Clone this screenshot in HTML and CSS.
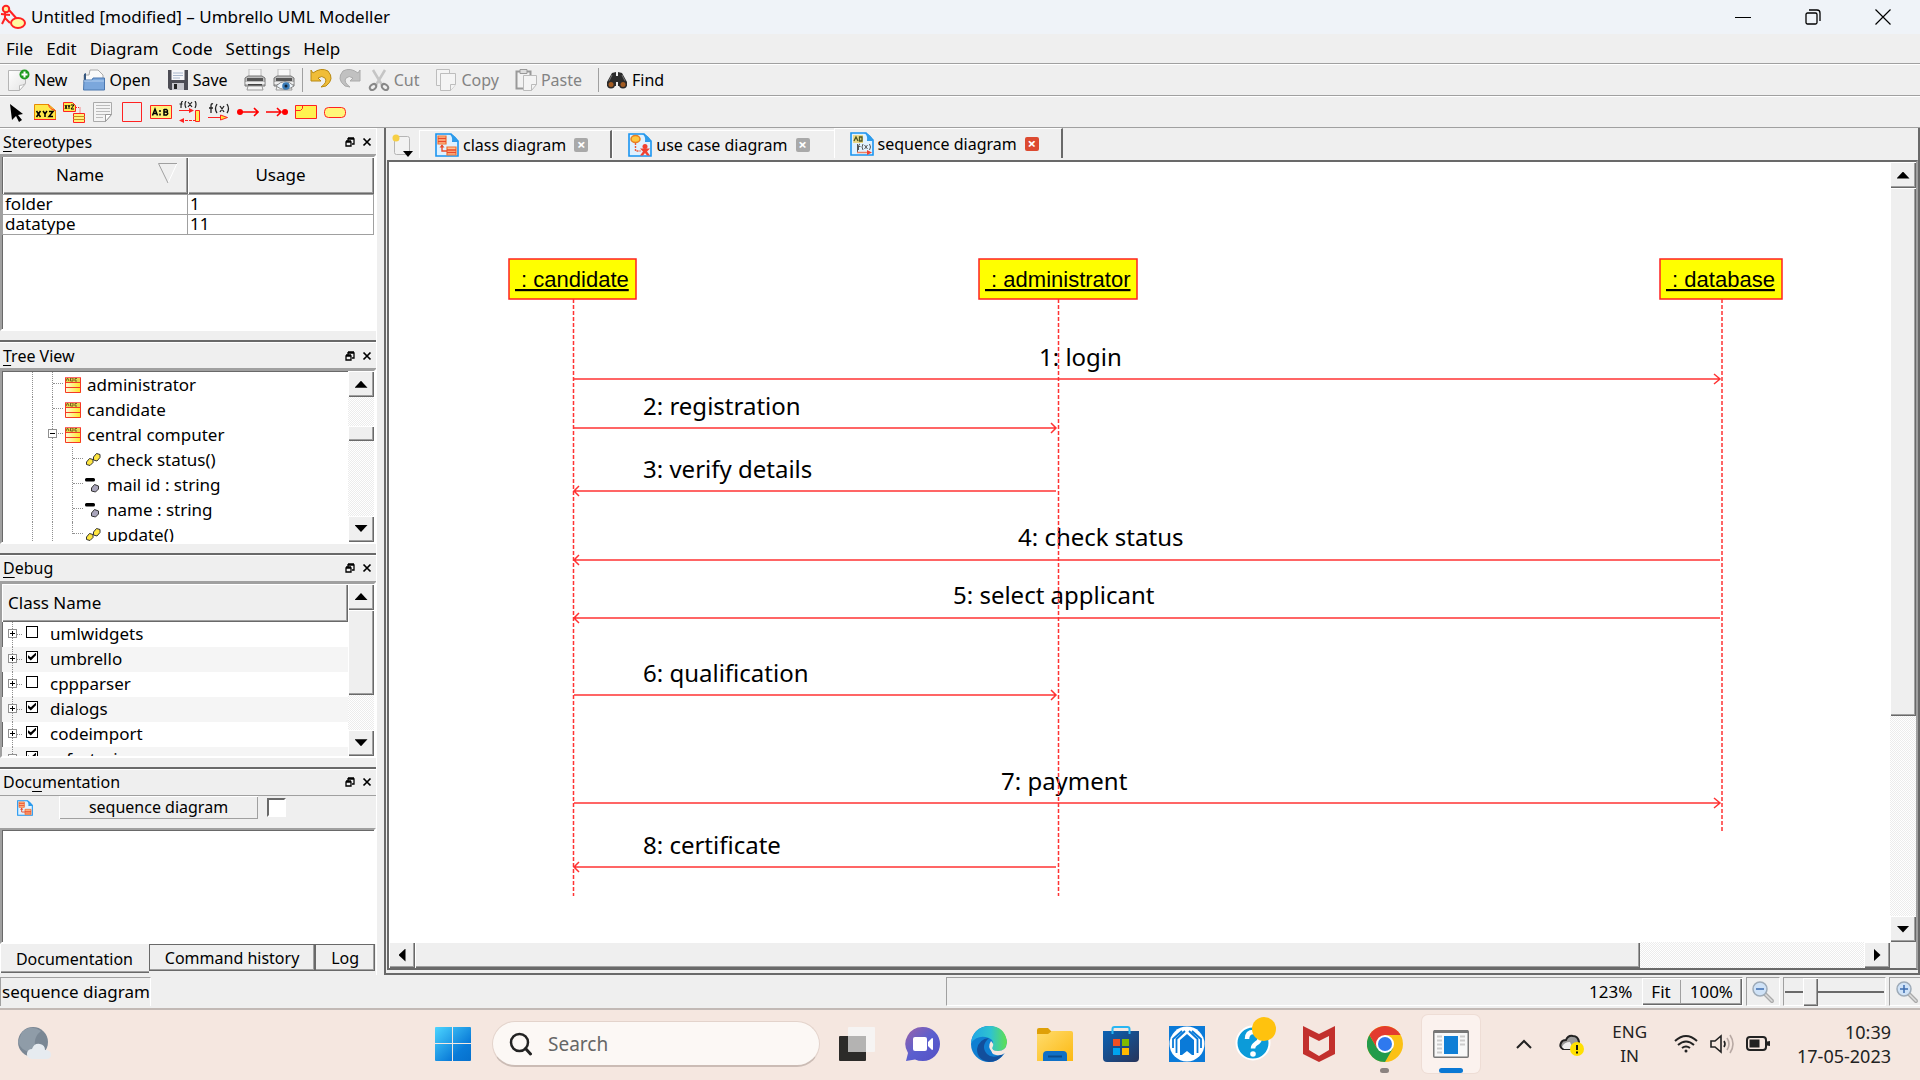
FILE: index.html
```html
<!DOCTYPE html>
<html lang="en">
<head>
<meta charset="utf-8">
<title>Untitled [modified] – Umbrello UML Modeller</title>
<link rel="stylesheet" href="styles.css">
</head>
<body>
<svg class="defs" aria-hidden="true">
  <defs>
    <linearGradient id="gPaper" x1="0" y1="0" x2="1" y2="1"><stop offset="0" stop-color="#fff"/><stop offset="1" stop-color="#e4e4e4"/></linearGradient>
    <linearGradient id="gYellow" x1="0" y1="0" x2="1" y2="0"><stop offset="0" stop-color="#fffbe0"/><stop offset="1" stop-color="#ffe620"/></linearGradient>
    <linearGradient id="gWin" x1="0" y1="0" x2="1" y2="1"><stop offset="0" stop-color="#4cd5ff"/><stop offset=".7" stop-color="#0a7bd8"/><stop offset="1" stop-color="#0670cc"/></linearGradient>
    <linearGradient id="gChat" x1="0" y1="0" x2="1" y2="1"><stop offset="0" stop-color="#9b62a8"/><stop offset=".5" stop-color="#5a5fcf"/><stop offset="1" stop-color="#5550c4"/></linearGradient>
    <linearGradient id="gEdge" x1="0" y1="0" x2="1" y2="0"><stop offset="0" stop-color="#1fa5e6"/><stop offset=".55" stop-color="#2fc3cf"/><stop offset="1" stop-color="#5fe04f"/></linearGradient>
    <linearGradient id="gFolder" x1="0" y1="0" x2="1" y2="1"><stop offset="0" stop-color="#ffdc6e"/><stop offset="1" stop-color="#fcb912"/></linearGradient>
    <linearGradient id="gStore" x1="0" y1="0" x2="1" y2="1"><stop offset="0" stop-color="#0a62b4"/><stop offset="1" stop-color="#28345a"/></linearGradient>
    <symbol id="class" viewBox="0 0 16 16"><rect width="16" height="16" fill="url(#gYellow)"/><path d="M0 0h16v5H0z" fill="#e4d84e"/><path d="M1 4L2.500 1L4 4M5.500 1v3h2.500v-3zM12 1.500h-2v2.500h2" fill="none" stroke="#765d20"/><path d="M.5.500v15h15V.5M0 5.500h16M0 10.500h16" fill="none" stroke="#f43a24"/><path d="M0 .5h16" stroke="#f66"/></symbol>
    <symbol id="op" viewBox="0 0 16 16"><path d="M8.500 5l3-3.500 3.500 1v3L12 9 8.500 8z" fill="#ffe640" stroke="#333"/><path d="M1.500 10l3-3.500L8 7.500v3L5 13.500 1.500 12.500z" fill="#ffe640" stroke="#333"/></symbol>
    <symbol id="attr" viewBox="0 0 16 16"><rect x="0" y="1" width="10" height="3.500" rx="1.500" fill="#000"/><path d="M6.500 11l3-3.500 4 1.500v3l-3 3-4-1z" fill="#a9a5bb" stroke="#333"/></symbol>
    <symbol id="float" viewBox="0 0 10 10"><path d="M3 2h6v5H7M3 1h6M1 5h5v4H1zM1 4h5M3 1v3" fill="none" stroke="#000" stroke-width="1.300"/></symbol>
    <symbol id="x" viewBox="0 0 10 10"><path d="M1.500 1.500l7 7M8.500 1.500l-7 7" stroke="#000" stroke-width="1.700"/></symbol>
    <symbol id="classdoc" viewBox="0 0 24 24"><path d="M1 1h15l7 7v15H1z" fill="#dff1ff" stroke="#1a94f0" stroke-width="1.600"/><path d="M14 1q4 2 3 8h6Q22 3 15 1z" fill="#2e9bea"/><path d="M3 3h8v8H3zM12 14h9v8h-9z" fill="#ffc090" stroke="#f07030" stroke-width="1.200"/><path d="M3 5.500h8M3 8.500h8M12 17h9M12 19.500h9M7 12v6h5" stroke="#ea4a2a" stroke-width="1.400" fill="none"/><path d="M4.500 14.500L7 11.500l2.500 3z" fill="#ea4a2a"/></symbol>
    <symbol id="usedoc" viewBox="0 0 24 24"><path d="M1 1h15l7 7v15H1z" fill="#dff1ff" stroke="#1a94f0" stroke-width="1.600"/><path d="M14 1q4 2 3 8h6Q22 3 15 1z" fill="#2e9bea"/><ellipse cx="7.500" cy="6" rx="4.500" ry="3.500" fill="#ffc840" stroke="#e88020" stroke-width="1.500"/><path d="M7.500 10v8h5" stroke="#ea5a3a" stroke-width="1.400" stroke-dasharray="2 1" fill="none"/><circle cx="17" cy="13.500" r="2.500" fill="#f04030"/><path d="M12 15.500h10l-3 3 3 4h-3l-2-2.500-2 2.500h-3l3-4z" fill="#f04030"/></symbol>
    <symbol id="seqdoc" viewBox="0 0 24 24"><path d="M1 1h15l7 7v15H1z" fill="#dff1ff" stroke="#1a94f0" stroke-width="1.600"/><path d="M14 1q4 2 3 8h6Q22 3 15 1z" fill="#2e9bea"/><rect x="3" y="3" width="10" height="8" fill="#ead889"/><path d="M4 9l2-4 2 4M9.500 5v4h2.500v-4z" stroke="#4b5520" fill="none" stroke-width="1.300"/><path d="M7.500 12v9M10 12q-1.500 0-1.500 3v3M7.500 14.500h3M13 12q-2 3 0 6M14.500 13l3 4M17.500 13l-3 4M19.500 12q2 3 0 6" stroke="#555" fill="none"/><path d="M7 20.500h11" stroke="#f08060" stroke-width="1.500"/><path d="M17 18l5 2.500-5 2.500z" fill="#f04030"/></symbol>
    <symbol id="printer" viewBox="0 0 22 22"><path d="M5 0h12v10H5z" fill="#f8f8f8" stroke="#bbb"/><path d="M1 9l3-2h14l3 2v8H1z" fill="#bdbdbd" stroke="#777"/><path d="M3 9h16v3H3z" fill="#555"/><path d="M1.500 14h19" stroke="#efefef" stroke-width="2"/><path d="M4 15h14v2H4z" fill="#444"/><path d="M4 17h14l1 4H3z" fill="#f4f4f4" stroke="#999"/></symbol>
    <symbol id="lens" viewBox="0 0 24 24"><path d="M14 14l7 7" stroke="#aaa" stroke-width="4" stroke-linecap="round"/><path d="M14 14l7 7" stroke="#ddd" stroke-width="1.500" stroke-linecap="round"/><circle cx="9" cy="9" r="7" fill="#cfe2f7" stroke="#9eabb8" stroke-width="1.500"/></symbol>
  </defs>
</svg>
<div class="screen">
  <header class="titlebar">
    <svg class="app-icon" viewBox="0 0 26 26"><g fill="none" stroke="#f22" stroke-width="2"><circle cx="6" cy="5" r="3.200" fill="#fff0a0"/><path d="M5 8v6M1 10l9 1M5 14l-3 6M5 14l5 5M9 6l8 9"/><ellipse cx="18" cy="19" rx="7" ry="5" fill="#fff9a0"/></g></svg>
    <h1>Untitled [modified] – Umbrello UML Modeller</h1>
    <div class="window-buttons">
      <button aria-label="Minimize"><svg viewBox="0 0 16 16"><path d="M0 8.500h16" stroke="#000"/></svg></button>
      <button aria-label="Restore"><svg viewBox="0 0 16 16" fill="none" stroke="#000" stroke-width="1.300"><rect x="1" y="4" width="11" height="11" rx="1.500"/><path d="M4 1h8q3 0 3 3v8"/></svg></button>
      <button aria-label="Close"><svg viewBox="0 0 16 16"><path d="M.5.500l15 15M15.500.500l-15 15" stroke="#000" stroke-width="1.200"/></svg></button>
    </div>
  </header>
  <nav class="menubar">
    <button>File</button><button>Edit</button><button>Diagram</button><button>Code</button><button>Settings</button><button>Help</button>
  </nav>
  <div class="toolbar">
    <button class="tool"><svg viewBox="0 0 22 22"><path d="M.5 1.500h17v13l-6 7H.5z" fill="url(#gPaper)" stroke="#b5b5b5"/><path d="M17.500 14.500l-6 7v-5q3 0 6-2z" fill="#fff" stroke="#bbb"/><circle cx="16.500" cy="5.500" r="5" fill="#1f9b1f"/><path d="M16.500 2.500v6M13.500 5.500h6" stroke="#fff" stroke-width="2"/></svg>New</button>
    <button class="tool"><svg viewBox="0 0 22 22"><path d="M1 6h5l1-5h8l5 5v8H1z" fill="#fafafa" stroke="#aaa"/><path d="M1 5l2-1v8H1z" fill="#36577f"/><path d="M1 11h8l1-2h11.500v12H.5z" fill="#7ba7dc" stroke="#4c78b0"/><path d="M1 12h20" stroke="#b7d2f2"/></svg>Open</button>
    <button class="tool"><svg viewBox="0 0 22 22"><path d="M1 1h20v20H3l-2-2z" fill="#4c4c54"/><path d="M4.500 1h13v10h-13z" fill="#f7f7fa"/><path d="M6 4h10M6 6.500h10M6 9h7" stroke="#a8b6cc"/><path d="M5 14h12v7H5z" fill="#c6c6cc"/><path d="M7 15h3v5H7z" fill="#222"/></svg>Save</button>
    <button class="tool icon" aria-label="Print"><svg viewBox="0 0 22 22"><use href="#printer"/></svg></button>
    <button class="tool icon" aria-label="Print preview"><svg viewBox="0 0 22 22"><use href="#printer"/><path d="M3 17q9-9 18 0-9 7-18 0z" fill="#eef5fb" stroke="#888"/><circle cx="13" cy="17" r="3.800" fill="#3a7cb8"/><circle cx="13" cy="17" r="1.500" fill="#123"/></svg></button>
    <span class="separator"></span>
    <button class="tool icon" aria-label="Undo"><svg viewBox="0 0 22 22"><path d="M1 1l2 3q8-6 15-2 7 8-2 15l-5 1q7-5 4-9-3-3-7 0l3 3H1z" fill="#f0bd38" stroke="#b98a12"/></svg></button>
    <button class="tool icon" aria-label="Redo" disabled><svg viewBox="0 0 22 22"><path d="M21 1l-2 3Q11-2 4 2q-7 8 2 15l5 1q-7-5-4-9 3-3 7 0l-3 3h10z" fill="#c1c1c1" stroke="#aaa"/></svg></button>
    <button class="tool" disabled><svg viewBox="0 0 22 22"><path d="M5 1l9 15M17 1L8 16" stroke="#c5c5c5" stroke-width="2.500"/><g fill="none" stroke="#888" stroke-width="2"><ellipse cx="5" cy="18" rx="3.500" ry="2.500" transform="rotate(-40 5 18)"/><ellipse cx="17" cy="18" rx="3.500" ry="2.500" transform="rotate(40 17 18)"/></g></svg>Cut</button>
    <button class="tool" disabled><svg viewBox="0 0 22 22"><g fill="#f4f4f4" stroke="#bdbdbd"><path d="M1.500.500h13v16h-13z"/><path d="M5.500 4.500h15v11l-5 6h-10z"/><path d="M20.500 15.500h-5v6"/></g></svg>Copy</button>
    <button class="tool" disabled><svg viewBox="0 0 22 22"><path d="M1.500 2.500h14v17h-14z" fill="#f2f2f2" stroke="#999" stroke-width="2"/><path d="M5 .5h7v4H5z" fill="#ddd" stroke="#999"/><path d="M8.500 6.500h13v9l-5 6h-8z" fill="#f4f4f4" stroke="#bbb"/><path d="M21.500 15.500h-5v6" fill="none" stroke="#bbb"/></svg>Paste</button>
    <span class="separator"></span>
    <button class="tool"><svg viewBox="0 0 22 22"><path d="M6 4l4-1v4h2V3l4 1 5 9v4H12v-4h-2v4H1v-4z" fill="#2b2b2b"/><path d="M6 6l-3 6M16 6l3 6" stroke="#777"/><circle cx="5" cy="15.500" r="4" fill="#2b2b2b"/><circle cx="17" cy="15.500" r="4" fill="#2b2b2b"/><circle cx="5" cy="15.500" r="2.500" fill="#a35c22"/><circle cx="17" cy="15.500" r="2.500" fill="#a35c22"/></svg>Find</button>
  </div>
  <div class="toolbar drawbar">
    <button aria-label="Select"><svg viewBox="0 0 22 22"><path d="M5 3l13 10-5 1 4 5-3 2-3-6-4 4z" fill="#000"/></svg></button>
    <button aria-label="Note"><svg viewBox="0 0 22 22"><path d="M.5 3.500h14l7 6v9H.5z" fill="#ffe84a" stroke="#e88a00"/><path d="M14.500 3.500q1 5 7 6" fill="none" stroke="#f22"/><path d="M0 18.500h22" stroke="#f22"/><path d="M2.500 10l4 6M6.500 10l-4 6M9 10l2 3 2-3M11 13v3M15 10.500h4l-4 5h4" stroke="#000" fill="none" stroke-width="1.500"/></svg></button>
    <button aria-label="Anchor"><svg viewBox="0 0 22 22"><path d="M.5 1.500h9l3 3v6H.5z" fill="#ffe84a" stroke="#f22"/><path d="M2 4l2 4M4 4L2 8M5 4l1 2 1-2M6 6v2M8 4h3L8 8h3" stroke="#000" fill="none"/><path d="M13 6.500h4v6" fill="none" stroke="#f22" stroke-dasharray="1 1"/><path d="M10.500 12.500h11v9h-11z" fill="#fff27a" stroke="#f22"/><path d="M10 15.500h12M10 18.500h12" stroke="#c88a20"/></svg></button>
    <button aria-label="Text"><svg viewBox="0 0 22 22"><path d="M1.500 1.500h18v12l-6 7h-12z" fill="#f4f4f4" stroke="#aaa"/><path d="M4 4.500h14M4 7.500h14M4 10.500h14M4 13.500h10M4 16.500h7" stroke="#bbb"/><path d="M19.500 13.500h-6v7z" fill="#fff" stroke="#999"/></svg></button>
    <button aria-label="Box"><svg viewBox="0 0 22 22"><path d="M1.500 1.500h19v19h-19z" fill="none" stroke="#f22"/></svg></button>
    <button aria-label="Object"><svg viewBox="0 0 22 22"><path d="M.5 4.500h21v13H.5z" fill="#fff27a" stroke="#f22"/><path d="M2.500 14.500L5 8l2.500 6.500M3.500 12.500h3M10 9v2M10 12.500v2M14 8v6h2.500q2.500-1.500 0-3H14M14 8.500h2.500q2 1.500 0 2.500" fill="none" stroke="#000" stroke-width="1.500"/></svg></button>
    <button aria-label="Synchronous message"><svg viewBox="0 0 22 22"><path d="M4 0q-2 0-2 7M.5 3h3M7 0q-2 3 0 7M9 1l4 5M13 1L9 6M16 0q2 3 0 7" fill="none" stroke="#222" stroke-width="1.200"/><path d="M0 9.500h12" stroke="#f22"/><path d="M2 19.500h14" stroke="#f22" stroke-dasharray="3 1"/><path d="M10 7l5 2.500-5 2.500zM5 17l-5 2.500L5 22z" fill="#f22"/><path d="M16.500 9.500h4v11h-4z" fill="#ffee50" stroke="#f22"/></svg></button>
    <button aria-label="Asynchronous message"><svg viewBox="0 0 22 22"><path d="M5 3q-2-1-2 2v7M1 7h4M9 3q-3 5 0 9M12 5l4 6M16 5l-4 6M19 3q3 5 0 9" fill="none" stroke="#222" stroke-width="1.300"/><path d="M0 16.500h14" stroke="#f22"/><path d="M12.500 14l7 2.500-7 2.500z" fill="#ffe030" stroke="#f22"/></svg></button>
    <button aria-label="Found message"><svg viewBox="0 0 22 22"><circle cx="3" cy="11" r="3" fill="#f00"/><path d="M3 11h18M17 7l4 4-4 4" stroke="#f00" stroke-width="1.600" fill="none"/></svg></button>
    <button aria-label="Lost message"><svg viewBox="0 0 22 22"><circle cx="19" cy="11" r="3" fill="#f00"/><path d="M0 11h15M11 7l4 4-4 4" stroke="#f00" stroke-width="1.600" fill="none"/></svg></button>
    <button aria-label="Combined fragment"><svg viewBox="0 0 22 22"><path d="M.5 4.500h21v13H.5z" fill="#fff250" stroke="#f22"/><path d="M.5 9.500h5l2-2v-3" fill="none" stroke="#f22"/></svg></button>
    <button aria-label="Precondition"><svg viewBox="0 0 22 22"><rect x=".5" y="6.500" width="21" height="10" rx="4" fill="#fff67a" stroke="#f22"/></svg></button>
  </div>

  <div class="workspace">
    <aside class="docks">
      <section class="dock dock-stereotypes">
        <div class="dock-title"><h2><u>S</u>tereotypes</h2><button aria-label="Float"><svg><use href="#float"/></svg></button><button aria-label="Close"><svg><use href="#x"/></svg></button></div>
        <div class="sunken">
          <table class="stereo">
            <thead><tr><th>Name<svg class="sort" viewBox="0 0 20 21"><path d="M19 .5L10 20" stroke="#fff" fill="none"/><path d="M19 .5H.5L10 20" stroke="#a0a0a0" fill="none"/></svg></th><th>Usage</th></tr></thead>
            <tbody><tr><td>folder</td><td>1</td></tr><tr><td>datatype</td><td>11</td></tr></tbody>
          </table>
        </div>
      </section>
      <section class="dock">
        <div class="dock-title"><h2><u>T</u>ree View</h2><button aria-label="Float"><svg><use href="#float"/></svg></button><button aria-label="Close"><svg><use href="#x"/></svg></button></div>
        <div class="sunken with-scroll">
          <ul class="tree">
            <li><i class="guide"></i><i class="guide elbow"></i><svg><use href="#class"/></svg>administrator</li>
            <li><i class="guide"></i><i class="guide elbow"></i><svg><use href="#class"/></svg>candidate</li>
            <li><i class="guide"></i><i class="guide elbow"><b class="expander minus"></b></i><svg><use href="#class"/></svg>central computer</li>
            <li><i class="guide"></i><i class="guide"></i><i class="guide elbow"></i><svg><use href="#op"/></svg>check status()</li>
            <li><i class="guide"></i><i class="guide"></i><i class="guide elbow"></i><svg><use href="#attr"/></svg>mail id : string</li>
            <li><i class="guide"></i><i class="guide"></i><i class="guide elbow"></i><svg><use href="#attr"/></svg>name : string</li>
            <li><i class="guide"></i><i class="guide"></i><i class="guide elbow last"></i><svg><use href="#op"/></svg>update()</li>
          </ul>
          <div class="scrollbar vertical tree-scroll"><button class="up" aria-label="Up"></button><span class="before"></span><span class="thumb"></span><span class="after"></span><button class="down" aria-label="Down"></button></div>
        </div>
      </section>
      <section class="dock">
        <div class="dock-title"><h2><u>D</u>ebug</h2><button aria-label="Float"><svg><use href="#float"/></svg></button><button aria-label="Close"><svg><use href="#x"/></svg></button></div>
        <div class="sunken with-scroll">
          <div class="debug">
            <div class="column-head">Class Name</div>
            <label><i class="guide"><b class="expander"></b></i><input type="checkbox">umlwidgets</label>
            <label><i class="guide"><b class="expander"></b></i><input type="checkbox" checked>umbrello</label>
            <label><i class="guide"><b class="expander"></b></i><input type="checkbox">cppparser</label>
            <label><i class="guide"><b class="expander"></b></i><input type="checkbox" checked>dialogs</label>
            <label><i class="guide"><b class="expander"></b></i><input type="checkbox" checked>codeimport</label>
            <label><i class="guide"><b class="expander"></b></i><input type="checkbox" checked>refactoring</label>
          </div>
          <div class="scrollbar vertical debug-scroll"><button class="up" aria-label="Up"></button><span class="thumb"></span><span class="after"></span><button class="down" aria-label="Down"></button></div>
        </div>
      </section>
      <section class="dock dock-doc">
        <div class="dock-title"><h2>Doc<u>u</u>mentation</h2><button aria-label="Float"><svg><use href="#float"/></svg></button><button aria-label="Close"><svg><use href="#x"/></svg></button></div>
        <div class="doc-row"><svg><use href="#classdoc"/></svg><button>sequence diagram</button><input type="checkbox" aria-label="Modified"></div>
        <textarea class="sunken" aria-label="Documentation"></textarea>
        <div class="dock-tabs"><button class="active">Documentation</button><button>Command history</button><button>Log</button></div>
      </section>
    </aside>

    <main class="editor">
      <div class="tabs">
        <button class="new-diagram" aria-label="New diagram"><svg viewBox="0 0 22 26"><path d="M4.500 4.500h11q2 0 2 2v14l-2 2h-11q-2 0-2-2v-14z" fill="#f2f2f2" stroke="#b5b5b5"/><circle cx="4" cy="6" r="3.500" fill="#f6cf45"/><path d="M11 19h10l-5 6z" fill="#000"/></svg></button>
        <div class="tab"><svg class="doc"><use href="#classdoc"/></svg><span>class diagram</span><button aria-label="Close class diagram">×</button></div>
        <div class="tab"><svg class="doc"><use href="#usedoc"/></svg><span>use case diagram</span><button aria-label="Close use case diagram">×</button></div>
        <div class="tab active"><svg class="doc"><use href="#seqdoc"/></svg><span>sequence diagram</span><button aria-label="Close sequence diagram">×</button></div>
      </div>
      <div class="view">
        <div class="canvas">
          <svg class="diagram" width="1500" height="780">
            <g class="objects">
              <rect x="120" y="97" width="127" height="40"/><rect x="590" y="97" width="158" height="40"/><rect x="1271" y="97" width="122" height="40"/>
            </g>
            <g class="names">
              <text x="126" y="125" xml:space="preserve"> : candidate</text>
              <text x="596" y="125" xml:space="preserve"> : administrator</text>
              <text x="1277" y="125" xml:space="preserve"> : database</text>
            </g>
            <g class="labels">
              <text x="650" y="204">1: login</text>
              <text x="254" y="253">2: registration</text>
              <text x="254" y="316">3: verify details</text>
              <text x="629" y="384">4: check status</text>
              <text x="564" y="442">5: select applicant</text>
              <text x="254" y="520">6: qualification</text>
              <text x="612" y="628">7: payment</text>
              <text x="254" y="692">8: certificate</text>
            </g>
            <path class="life" d="M184.500 137V734M669.500 137V734M1333 137V671"/>
            <g class="messages">
              <path d="M185 217H1331m-6 -5l6 5l-6 5"/>
              <path d="M185 266H667m-5 -5l5 5l-5 5"/>
              <path d="M667 329H185m5 -5l-5 5l5 5"/>
              <path d="M1331 398H185m5 -5l-5 5l5 5"/>
              <path d="M1331 456H185m5 -5l-5 5l5 5"/>
              <path d="M185 533H667m-5 -5l5 5l-5 5"/>
              <path d="M185 641H1331m-6 -5l6 5l-6 5"/>
              <path d="M667 705H185m5 -5l-5 5l5 5"/>
            </g>
          </svg>
        </div>
        <div class="scrollbar vertical view-v"><button class="up" aria-label="Up"></button><span class="thumb"></span><span class="after"></span><button class="down" aria-label="Down"></button></div>
        <div class="scrollbar horizontal view-h"><button class="left" aria-label="Left"></button><span class="thumb"></span><span class="after"></span><button class="right" aria-label="Right"></button></div>
      </div>
    </main>
  </div>

  <footer class="statusbar">
    <span class="status-text">sequence diagram</span>
    <span class="status-panel"><span>123%</span><span class="fit"><button>Fit</button><button>100%</button></span></span>
    <button class="status-cell" aria-label="Zoom out"><svg viewBox="0 0 24 24"><use href="#lens"/><path d="M5 9h8" stroke="#3c6cb0" stroke-width="1.500"/></svg></button>
    <span class="status-cell slider"><input type="range" aria-label="Zoom" min="0" max="100" value="22"></span>
    <button class="status-cell zoom-in" aria-label="Zoom in"><svg viewBox="0 0 24 24"><use href="#lens"/><path d="M5 9h8M9 5v8" stroke="#3c6cb0" stroke-width="1.500"/></svg></button>
  </footer>

  <div class="taskbar">
    <button class="weather" aria-label="Weather"><svg viewBox="0 0 36 36"><circle cx="16" cy="16" r="15" fill="#7a8794"/><path d="M5 6Q14-2 24 5q-10 8-4 20-14 4-19-9z" fill="#8f9ca8"/><path d="M15 33q-6-1-5-6 1-4 5-4 2-6 8-5 5 1 5 6 6 0 6 5 0 4-5 4z" fill="#e6ebf0"/></svg></button>
    <div class="apps">
      <button class="app" aria-label="Start"><svg viewBox="0 0 36 36"><path d="M0 2q0-1 1-1h16v16H0zM18 1h17q1 0 1 1v15H18zM0 18h17v17H1q-1 0-1-1zM18 18h18v16q0 1-1 1H18z" fill="url(#gWin)"/></svg></button>
      <label class="search"><svg viewBox="0 0 24 24"><circle cx="10.500" cy="10.500" r="8.500" fill="none" stroke="#222" stroke-width="2.500"/><path d="M16.500 16.500l5 5.500" stroke="#222" stroke-width="3" stroke-linecap="round"/></svg><input type="text" placeholder="Search" aria-label="Search"></label>
      <button class="app" aria-label="Task view"><svg viewBox="0 0 36 36"><rect x="0" y="10" width="27" height="25" rx="1" fill="#2c2b29"/><rect x="9" y="1" width="27" height="25" rx="1" fill="#f6f4f3"/><path d="M9 10h18v16H9z" fill="#b4b3b2"/></svg></button>
      <button class="app" aria-label="Chat"><svg viewBox="0 0 36 36"><path d="M18 1a17 17 0 0 1 0 34q-5 0-8-1.500L1 35l2-8A17 17 0 0 1 18 1z" fill="url(#gChat)"/><rect x="8" y="11" width="14" height="14" rx="2" fill="#fff"/><path d="M23 16l4-4q1 0 1 1v10q0 1-1 1l-4-4z" fill="#fff"/></svg></button>
      <button class="app" aria-label="Edge"><svg viewBox="0 0 36 36"><circle cx="18" cy="18" r="18" fill="#0f7fd2"/><path d="M0 17Q2 1 18 0q16 0 18 16 0 9-10 9-6 0-6-3 5-7-2-10Q7 8 0 17z" fill="url(#gEdge)"/><path d="M18 12q-9 8-2 16 6 6 17-1-5 9-15 9-12-2-12-13 2-10 12-11z" fill="#124f9c"/><path d="M36 17q-1 8-9 8-7 0-6-4-2 7 4 8 5 1 9-2l2-2z" fill="#f5e7e0"/><path d="M20 15q-4 6 1 11 5 4 11 1-5-1-9-2-3-2-1-5 1-2-2-5z" fill="#f5e7e0"/></svg></button>
      <button class="app" aria-label="File Explorer"><svg viewBox="0 0 36 36"><path d="M0 4q0-2 2-2h9l4 4v5H0z" fill="#dfa008"/><path d="M0 8h11l4-3h19q2 0 2 2v28H0z" fill="url(#gFolder)"/><path d="M6 35v-6q0-4 4-4h16q4 0 4 4v6z" fill="#0f70c6"/><path d="M11 30.500h14" stroke="#0a4c8c" stroke-width="2"/></svg></button>
      <button class="app" aria-label="Store"><svg viewBox="0 0 36 36"><path d="M9.500 9V3q0-2 2-2h13q2 0 2 2v6" fill="none" stroke="#29b6f2" stroke-width="2"/><path d="M0 5h36v27q0 4-4 4H4q-4 0-4-4z" fill="url(#gStore)"/><path d="M9.500 8V5M26.500 8V5" stroke="#29b6f2" stroke-width="2"/><path d="M10 13h7v7h-7z" fill="#f25022"/><path d="M19 13h7v7h-7z" fill="#7fba00"/><path d="M10 22h7v7h-7z" fill="#00a4ef"/><path d="M19 22h7v7h-7z" fill="#ffb900"/></svg></button>
      <button class="app" aria-label="Support"><svg viewBox="0 0 36 36"><path d="M0 0h36v36H0z" fill="#0a7ad8"/><circle cx="18" cy="18" r="17.500" fill="#fff"/><path d="M11 29V14l7-6 7 6v15h-2l-5-4-5 4z" fill="#0a7ad8"/><path d="M7.500 27V13L16 5M28.500 27V13L20 5M4 22v-9l9-8M32 22v-9l-9-8" fill="none" stroke="#0a7ad8" stroke-width="1.800"/></svg></button>
      <button class="app help" aria-label="Help"><svg viewBox="-3 0 46 46"><circle cx="20" cy="27" r="16.500" fill="#0c9bd9" stroke="#fff" stroke-width="2"/><path d="M14 23q0-7 6.500-7t6.500 5.500q0 4-4 6-3 2-3 5" fill="none" stroke="#fff" stroke-width="4.500"/><circle cx="20" cy="38" r="2.800" fill="#fff"/><circle cx="31" cy="13" r="12" fill="#ffc20e"/></svg></button>
      <button class="app" aria-label="McAfee"><svg viewBox="0 0 36 36"><path d="M2 0l16 8 16-8v28l-16 8L2 28zM8 10v14l10 6 10-6V10l-10 5z" fill="#c2302d" fill-rule="evenodd"/></svg></button>
      <button class="app running" aria-label="Chrome"><svg viewBox="0 0 36 36"><circle cx="18" cy="18" r="18" fill="#fbc116"/><path d="M2.500 9A18 18 0 0 1 33.600 9H18z" fill="#e33b2e"/><path d="M2.400 9A18 18 0 0 0 18 36l7.800-13.500L10 22z" fill="#239b4b"/><path d="M2.400 9L10 22 18 9z" fill="#e33b2e"/><circle cx="18" cy="18" r="9" fill="#fff"/><circle cx="18" cy="18" r="7" fill="#2f79ee"/></svg></button>
      <button class="app current" aria-label="Umbrello"><svg viewBox="0 0 36 36"><rect x=".75" y="4.750" width="34.500" height="26.500" rx="1" fill="#f8f8f8" stroke="#777" stroke-width="1.500"/><path d="M1 5.500h34" stroke="#777" stroke-width="3"/><path d="M11 10h14v18H11z" fill="#0f7fd6"/><path d="M4 10.500h5M4 14.500h5M4 18.500h5M4 22.500h5M4 26.500h5M27 10.500h5M27 14.500h5M27 18.500h5" stroke="#ccc" stroke-width="2"/></svg></button>
    </div>
    <div class="tray">
      <button aria-label="Hidden icons"><svg width="16" height="16" viewBox="0 0 16 16"><path d="M1 12l7-7 7 7" fill="none" stroke="#222" stroke-width="2"/></svg></button>
      <button class="cloud" aria-label="OneDrive"><svg width="26" height="24" viewBox="0 0 26 24"><path d="M4 17q-4-2-2-6 1-3 5-3 2-5 7-4 5 0 6 6v7z" fill="#9a9a9a" stroke="#222" stroke-width="2"/><path d="M3 15q2-5 8-5l3 7H5z" fill="#eee"/><circle cx="18" cy="17" r="7" fill="#ffe000"/><path d="M18 13v5M18 19.500v2" stroke="#111" stroke-width="2"/></svg></button>
      <button class="lang">ENG<br>IN</button>
      <button class="system" aria-label="Network, volume and battery">
        <svg width="24" height="24" viewBox="0 0 24 24" fill="none" stroke="#222" stroke-width="2"><path d="M1 9q11-10 22 0M4 13q8-7 16 0M8 16q4-3 8 0"/><circle cx="12" cy="19" r="1.500" fill="#222" stroke="none"/></svg>
        <svg width="24" height="24" viewBox="0 0 24 24" fill="none" stroke="#222" stroke-width="1.600"><path d="M1 9h4l6-5v16l-6-5H1zM14 9q2 3 0 6"/><path d="M17 6q4 6 0 12M20 3q6 9 0 18" stroke="#b8a9a4"/></svg>
        <svg width="24" height="24" viewBox="0 0 24 24"><rect x="1" y="5" width="19" height="13" rx="3" fill="none" stroke="#222" stroke-width="2"/><rect x="3.500" y="7.500" width="10" height="8" fill="#222"/><path d="M21 9.500l3-.5v5l-3-.5z" fill="#222"/></svg>
      </button>
      <button class="clock">10:39<br>17-05-2023</button>
    </div>
  </div>
</div>
</body>
</html>
```
FILE: styles.css
```css
:root {
  --face: #efefef;
  --mid: #a0a0a0;
  --dark: #696969;
  --bevel: inset 1px 1px #fff, inset -1px -1px var(--dark), inset -2px -2px var(--mid);
}
* { box-sizing: border-box; }
body {
  margin: 0;
  font: 17px/24px "Noto Sans", "Open Sans", sans-serif;
  color: #000;
  background: var(--face);
}
button, input, textarea { font: inherit; color: inherit; margin: 0; }
button { border: 0; padding: 0; background: none; white-space: nowrap; }
h1, h2 { margin: 0; font-size: inherit; font-weight: 400; }
ul { margin: 0; padding: 0; list-style: none; }
i, b { font-style: normal; }
u { text-underline-offset: 3px; }
svg { display: block; flex: none; }
.defs { position: absolute; width: 0; height: 0; }

.screen { display: flex; flex-direction: column; height: 100vh; overflow: hidden; }

/* Title and menu */
.titlebar { display: flex; align-items: center; flex: none; height: 34px; background: #eff3f8; }
.app-icon { width: 26px; height: 26px; margin-right: 5px; }
.titlebar h1 { flex: 1; }
.window-buttons { display: flex; padding-right: 2px; }
.window-buttons button { width: 70px; height: 34px; display: grid; place-items: center; }
.window-buttons svg { width: 16px; height: 16px; }
.menubar { display: flex; flex: none; height: 30px; padding-left: 6px; gap: 13px; border-bottom: 1px solid var(--mid); }

/* Toolbars */
.toolbar { display: flex; flex: none; align-items: center; height: 32px; padding-left: 8px; gap: 7px; border-top: 1px solid #fff; border-bottom: 1px solid var(--mid); font-size: 16px; }
.tool { display: flex; align-items: center; gap: 4px; padding-right: 9px; }
.tool svg { width: 22px; height: 22px; }
.tool.icon { padding: 0; }
.tool:disabled { color: #838383; }
.separator { width: 1px; height: 24px; background: var(--mid); }
.drawbar { padding-left: 5px; }
.drawbar svg { width: 22px; height: 22px; }

/* Bevelled parts */
.sunken { border: 2px solid; border-color: var(--mid) #fff #fff var(--mid); box-shadow: inset 1px 1px var(--dark); background: #fff; }
.scrollbar { display: flex; background: repeating-conic-gradient(#fff 0 25%, #ececec 0 50%) 0 0 / 2px 2px; }
.vertical { flex-direction: column; width: 26px; }
.scrollbar button, .thumb { background: var(--face); box-shadow: var(--bevel); }
.scrollbar button { flex: none; width: 26px; height: 26px; display: grid; place-items: center; }
.scrollbar button::before { content: ""; width: 13px; height: 7px; background: #000; clip-path: polygon(50% 0, 100% 100%, 0 100%); }
.scrollbar .down::before { clip-path: polygon(0 0, 100% 0, 50% 100%); }
.scrollbar .left::before { width: 7px; height: 13px; clip-path: polygon(0 50%, 100% 0, 100% 100%); }
.scrollbar .right::before { width: 7px; height: 13px; clip-path: polygon(0 0, 100% 50%, 0 100%); }

.workspace { display: grid; grid-template-columns: 377px 1fr; column-gap: 7px; flex: 1; min-height: 0; }

/* Docks */
.docks { display: grid; grid-template-rows: 214fr 212fr 214fr 206fr; min-height: 0; border-right: 1px solid #fff; }
.dock { display: flex; flex-direction: column; min-height: 0; padding-bottom: 9px; border-bottom: 2px solid var(--dark); }
.dock-title { display: flex; align-items: center; flex: none; height: 27px; padding: 0 4px 0 3px; gap: 7px; border-top: 1px solid #fff; border-bottom: 1px solid var(--mid); font-size: 16px; }
.dock-title h2 { flex: 1; }
.dock-title svg { width: 10px; height: 10px; }
.dock > .sunken { flex: 1; min-height: 0; width: 376px; overflow: hidden; }
.with-scroll { display: grid; grid-template-columns: 1fr 26px; }

.stereo { width: 100%; border-collapse: collapse; table-layout: fixed; line-height: 18px; }
.stereo th { position: relative; height: 37px; padding: 0; font-weight: 400; background: var(--face); box-shadow: var(--bevel); }
.stereo th:first-child { width: 185px; padding-right: 30px; }
.stereo td { height: 20px; padding: 0 0 0 2px; border: 1px solid var(--mid); }
.sort { position: absolute; right: 10px; top: 6px; width: 20px; height: 21px; }

.tree { padding: 1px 0 0 30px; overflow: hidden; }
.tree li { display: flex; align-items: center; height: 25px; }
.tree svg { width: 16px; height: 16px; margin-right: 6px; }
.guide { position: relative; flex: none; align-self: stretch; width: 20px; border-left: 1px dotted #909090; }
.elbow { width: 13px; }
.elbow::after { content: ""; position: absolute; left: 0; top: 11px; width: 10px; border-top: 1px dotted #909090; }
.elbow.last { height: 12px; }
.expander { position: absolute; left: -5px; top: 7px; z-index: 1; width: 9px; height: 9px; border: 1px solid #909090; background: linear-gradient(#000, #000) center / 5px 1px no-repeat, linear-gradient(#000, #000) center / 1px 5px no-repeat, #fff; }
.expander.minus { background: linear-gradient(#000, #000) center / 5px 1px no-repeat, #fff; }
.tree-scroll .before { flex: 30; }
.tree-scroll .thumb { flex: 15; }
.tree-scroll .after { flex: 77; }

.debug { overflow: hidden; }
.column-head { height: 38px; padding: 7px 6px 0; background: var(--face); box-shadow: var(--bevel); }
.debug label { display: flex; height: 25px; padding-left: 10px; }
.debug label:nth-of-type(even) { background: #f5f5f5; }
.debug .guide { width: 14px; }
.debug .guide::after { content: ""; position: absolute; left: 4px; top: 12px; width: 5px; border-top: 1px dotted #909090; }
.debug input { appearance: none; width: 12px; height: 12px; margin: 4px 12px 0 0; border: 1px solid #000; background: #fff; }
.debug input:checked::before { content: ""; display: block; width: 8px; height: 8px; margin: 1px; background: #000; clip-path: polygon(0 35%, 35% 60%, 100% 0, 100% 35%, 35% 100%, 0 70%); }
.debug-scroll .thumb { flex: 87; }
.debug-scroll .after { flex: 36; }

.dock-doc { padding-bottom: 0; border-bottom: 0; font-size: 16px; }
.doc-row { display: flex; align-items: flex-start; flex: none; height: 32px; padding-left: 17px; }
.doc-row svg { width: 16px; height: 16px; margin: 4px 26px 0 0; }
.doc-row button { width: 199px; height: 23px; line-height: 22px; box-shadow: inset 1px 1px #fff, inset -1px -1px var(--mid); }
.doc-row input { appearance: none; width: 19px; height: 19px; margin: 2px 0 0 9px; border: 2px solid; border-color: var(--dark) #fff #fff var(--dark); background: #fff; }
textarea.sunken { display: block; resize: none; outline: 0; }
.dock-tabs { display: flex; align-items: flex-start; flex: none; height: 31px; width: 375px; }
.dock-tabs button { flex: auto; height: 27px; padding: 0 8px; box-shadow: inset 1px 1px var(--dark), inset -1px -1px var(--dark), inset -2px -2px var(--mid); }
.dock-tabs .active { height: 29px; box-shadow: inset 1px 0 #fff, inset 0 -1px var(--dark), inset 0 -2px var(--mid); }

/* Editor */
.editor { display: flex; flex-direction: column; min-width: 0; min-height: 0; border: solid var(--dark); border-width: 0 2px 2px 2px; }
.tabs { display: flex; align-items: flex-end; flex: none; height: 32px; padding: 0 0 2px 6px; font-size: 16px; }
.new-diagram svg { width: 22px; height: 26px; }
.tab { display: flex; align-items: center; height: 28px; padding: 0 22px 0 15px; border: 1px solid #fff; border-right: 2px solid var(--dark); border-bottom: 0; }
.new-diagram + .tab { margin-left: 5px; }
.tab:nth-of-type(2) { border-right: 0; padding-right: 24px; }
.tab.active { height: 30px; }
.tab .doc { width: 24px; height: 24px; margin-right: 4px; }
.tab button { width: 14px; height: 14px; margin-left: 8px; border-radius: 2px; background: #a9a9a9; color: #fff; font-size: 15px; font-weight: 700; line-height: 13px; }
.tab.active button { background: #dc4a30; }
.view { display: grid; grid-template: 1fr 26px / 1fr 26px; flex: 1; min-height: 0; margin: 0 0 3px 1px; border: 2px solid; border-color: var(--dark) var(--mid) var(--dark) var(--dark); }
.canvas { overflow: hidden; background: #fff; min-width: 0; min-height: 0; }
.view-v .thumb { flex: 529; }
.view-v .after { flex: 201; }
.view-h .thumb { flex: 1226; }
.view-h .after { flex: 224; }
.objects rect { fill: #ff0; stroke: #f22; stroke-width: 1.500; }
.names { font: 22px "Liberation Sans", Arial, sans-serif; text-decoration: underline; }
.labels { font: 24px "Noto Sans", sans-serif; }
.life { stroke: #f33; stroke-width: 1.500; stroke-dasharray: 4 2; }
.messages { fill: none; stroke: #f33; stroke-width: 1.500; }

/* Status bar */
.statusbar { display: flex; align-items: stretch; flex: none; height: 35px; padding: 2px 0; gap: 3px; border-bottom: 2px solid #c2b9b5; }
.status-text { display: flex; align-items: center; padding-left: 1px; border-left: 1px solid var(--mid); border-top: 1px solid var(--mid); border-right: 1px solid #fff; }
.status-panel { display: flex; align-items: center; justify-content: flex-end; gap: 10px; width: 797px; margin-left: auto; border: 1px solid; border-color: var(--mid) #fff #fff var(--mid); }
.fit { display: flex; align-items: center; align-self: stretch; box-shadow: var(--bevel); }
.fit button { padding: 0 9px; }
.fit button + button { border-left: 1px solid var(--mid); }
.status-cell { display: grid; place-items: center; width: 34px; border: 1px solid; border-color: var(--mid) #fff #fff var(--mid); }
.status-cell svg { width: 24px; height: 24px; }
.status-cell.zoom-in { width: 31px; border-right: 0; padding-left: 4px; }
.slider { width: 103px; }
.slider input { appearance: none; width: 99px; height: 28px; background: linear-gradient(var(--dark), var(--dark)) center / 100% 2px no-repeat; }
.slider input::-webkit-slider-thumb { appearance: none; width: 15px; height: 28px; background: var(--face); box-shadow: var(--bevel); }

/* Taskbar */
.taskbar { display: grid; grid-template-columns: 420fr auto 436fr; align-items: center; flex: none; height: 70px; padding-bottom: 2px; background: #f5e7e0; }
.weather { justify-self: start; margin-left: 17px; }
.weather svg { width: 36px; height: 36px; }
.apps { display: flex; align-items: center; }
.app { position: relative; width: 66px; height: 58px; display: grid; place-items: center; }
.app svg { width: 36px; height: 36px; }
.app.help svg { width: 46px; height: 46px; margin-bottom: 10px; }
.search { display: flex; align-items: center; gap: 15px; width: 328px; height: 46px; margin: 0 4px 0 6px; padding: 0 16px; border: 1px solid #e3d3cb; border-bottom: 2px solid #cbbcb5; border-radius: 23px; background: #fcf8f5; }
.search svg { width: 24px; height: 24px; }
.search input { flex: 1; min-width: 0; padding: 0; border: 0; outline: 0; background: none; font-size: 19px; }
.search input::placeholder { color: #666; opacity: 1; }
.running::after, .current::after { content: ""; position: absolute; left: 28px; bottom: 0; width: 9px; height: 5px; border-radius: 3px; background: #8c8380; }
.current { width: 58px; margin: 0 4px; border-radius: 6px; background: #fbf2ee; box-shadow: 0 0 0 1px #eeddd5; }
.current::after { left: 17px; width: 24px; background: #0a78d4; }
.tray { display: flex; align-items: center; justify-content: flex-end; gap: 27px; padding-right: 29px; color: #222; line-height: 24px; }
.lang { text-align: center; }
.system { display: flex; gap: 12px; }
.clock { text-align: right; font-size: 18px; }
```
